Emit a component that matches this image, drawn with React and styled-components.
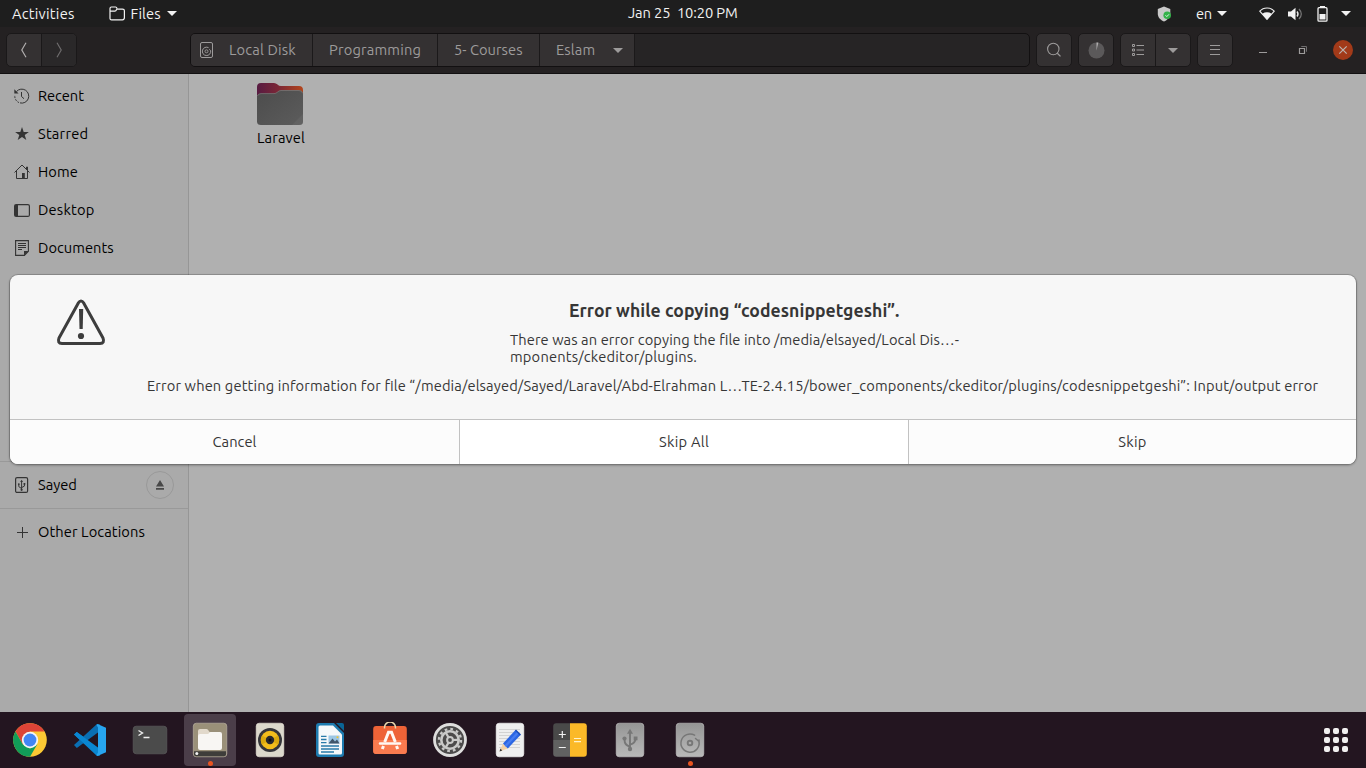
import React from "react";
import styled, { createGlobalStyle, css } from "styled-components";

const Global = createGlobalStyle`
  * { box-sizing: border-box; }
  body { margin: 0; overflow: hidden; background: #231520; }
  button { font: inherit; color: inherit; border: 0; padding: 0; margin: 0; background: none; }
  svg { display: block; flex: none; }
`;

const Desktop = styled.div`
  position: relative;
  width: 1366px;
  height: 768px;
  display: flex;
  flex-direction: column;
  font-family: Ubuntu, "Noto Sans", sans-serif;
  font-size: 14.667px;
  line-height: 18px;
  font-feature-settings: "liga" 1;
`;

const Label = styled.span`
  white-space: pre;
  letter-spacing: ${(p) => p.$track || 0}px;
`;

/* ---------- top panel ---------- */
const Panel = styled.header`
  height: 27px;
  flex: none;
  display: grid;
  grid-template-columns: 628px 1fr auto;
  align-items: center;
  padding-right: 15px;
  background: #1e1e1e;
  color: #f2f2f2;
  line-height: 17px;
`;
const Clock = styled.div`
  padding-bottom: 2px;
`;
const PanelStart = styled.div`
  display: flex;
  align-items: center;
  padding-left: 12px;
  gap: 34px;
`;
const AppMenu = styled.div`
  display: flex;
  align-items: center;
  gap: 6px;
`;
const Tray = styled.div`
  display: flex;
  align-items: center;
`;
const TrayItem = styled.div`
  display: flex;
  align-items: center;
  gap: 5px;
  margin-left: ${(p) => p.$before}px;
`;

/* ---------- header bar ---------- */
const HeaderBar = styled.div`
  height: 47px;
  flex: none;
  display: flex;
  align-items: center;
  padding: 0 13px 0 6px;
  background: #242122;
  border-bottom: 1px solid #121011;
  color: #9d9b9b;
`;
const ButtonGroup = styled.div`
  display: flex;
  height: 34px;
  margin-right: ${(p) => p.$after || 0}px;
  border: 1px solid #1a1819;
  border-radius: 5px;
  background: #343132;
  overflow: hidden;
`;
const ToolButton = styled.button`
  width: ${(p) => p.$width || 34}px;
  display: flex;
  align-items: center;
  justify-content: center;
  background: ${(p) => (p.$muted ? "#2a2829" : "transparent")};
  & + & { border-left: 1px solid #1a1819; }
`;
const PathBar = styled.nav`
  display: flex;
  width: 840px;
  height: 34px;
  margin-right: 6px;
  border: 1px solid #121011;
  border-radius: 5px;
  background: #262425;
  overflow: hidden;
`;
const Crumb = styled.div`
  display: flex;
  align-items: center;
  width: ${(p) => p.$width}px;
  padding-left: ${(p) => p.$inset}px;
  gap: ${(p) => p.$gap || 0}px;
  background: #343132;
  border-right: 1px solid #1b191a;
`;
const WindowControls = styled.div`
  flex: 1;
  display: flex;
  align-items: center;
  justify-content: flex-end;
  gap: 20px;
`;
const ControlButton = styled.button`
  width: 20px;
  height: 20px;
  display: flex;
  align-items: center;
  justify-content: center;
  border-radius: 50%;
  ${(p) => p.$close && css`background: #a23a19; color: #bbb3b0;`}
`;

/* ---------- file window ---------- */
const Body = styled.div`
  flex: 1;
  display: flex;
  min-height: 0;
`;
const Sidebar = styled.aside`
  width: 189px;
  background: #aaaaaa;
  border-right: 1px solid #969696;
  color: #000000;
`;
const Places = styled.div`
  padding: ${(p) => (p.$first ? 3 : 4)}px 0;
  min-height: ${(p) => p.$height || 0}px;
  border-bottom: ${(p) => (p.$last ? "0" : "1px solid #999999")};
`;
const Place = styled.div`
  height: 38px;
  display: flex;
  align-items: center;
  gap: 8px;
  padding: 0 14px;
  svg { color: #343434; }
`;
const Eject = styled.button`
  width: 28px;
  height: 28px;
  margin-left: auto;
  display: flex;
  align-items: center;
  justify-content: center;
  border: 1px solid #999;
  border-radius: 50%;
`;
const FileView = styled.main`
  flex: 1;
  background: #b0b0b0;
  padding: 9px 0 0 49px;
  color: #000000;
`;
const FileTile = styled.div`
  width: 86px;
  display: flex;
  flex-direction: column;
  align-items: center;
  gap: 3px;
  svg { margin-right: 2px; }
`;

/* ---------- error dialog ---------- */
const Dialog = styled.section`
  position: absolute;
  left: 10px;
  top: 275px;
  width: 1346px;
  height: 189px;
  display: flex;
  flex-direction: column;
  background: #f7f7f7;
  border-radius: 8px;
  box-shadow: 0 0 0 1px rgba(0, 0, 0, 0.16), 0 1px 2px 1px rgba(0, 0, 0, 0.2);
  overflow: hidden;
  color: #363636;
`;
const DialogContent = styled.div`
  flex: 1;
  display: flex;
  padding: 24px 0 0 46px;
`;
const Messages = styled.div`
  flex: 1;
  padding-left: 41px;
  display: flex;
  flex-direction: column;
`;
const Title = styled.h1`
  margin: 0 0 9px;
  padding-left: 422px;
  font-size: 17.6px;
  line-height: 23px;
  font-weight: 700;
`;
const Reason = styled.p`
  margin: 0 0 11px;
  padding-left: 363px;
  display: flex;
  flex-direction: column;
  line-height: 17px;
`;
const Detail = styled.p`
  margin: 0;
  line-height: 19px;
`;
const Actions = styled.div`
  height: 45px;
  display: grid;
  grid-template-columns: 449px 449px 1fr;
  border-top: 1px solid #c2c2c2;
`;
const ActionButton = styled.button`
  background: ${(p) => (p.$focus ? "#ffffff" : "#fcfcfc")};
  & + & { border-left: 1px solid #c2c2c2; }
`;

/* ---------- dock ---------- */
const Dock = styled.footer`
  height: 56px;
  flex: none;
  display: flex;
  align-items: center;
  justify-content: space-between;
  padding-right: 18px;
  background: #231520;
`;
const Launchers = styled.div`
  display: flex;
  height: 100%;
  gap: 8px;
  padding: 2px 4px;
`;
const Launcher = styled.button`
  position: relative;
  width: 52px;
  height: 52px;
  display: flex;
  align-items: center;
  justify-content: center;
  border-radius: 4px;
  background: ${(p) => (p.$active ? "#4b3e49" : "transparent")};
`;
const RunningDot = styled.i`
  position: absolute;
  left: 23.5px;
  bottom: 0;
  width: 5px;
  height: 5px;
  border-radius: 50%;
  background: #e95420;
`;
const AppGrid = styled.div`
  display: grid;
  grid-template-columns: repeat(3, 6px);
  gap: 3px;
  i { width: 6px; height: 6px; border-radius: 2px; background: #f1eff0; }
`;

/* ---------- icons ---------- */
const Arrow = ({ w = 10, h = 5 }) => (
  <svg width={w} height={h} viewBox="0 0 10 5" preserveAspectRatio="none"><path d="M0 0h10L5 5z" fill="currentColor" /></svg>
);
const Line = ({ size = 16, sw = 1, children }) => (
  <svg width={size} height={size} viewBox={`0 0 ${size} ${size}`} fill="none" stroke="currentColor" strokeWidth={sw}>{children}</svg>
);
const FolderLine = () => (
  <Line><path strokeWidth="1.2" d="M1 12.500V2.600Q1 1 2.400 1h4.200q1 0 1.300 1.200l.4 1h5.200q1.900 0 1.900 1.600v6.800q0 2.200-1.900 2.200H2.600Q1 13.800 1 12.500zM1 5.200h4.800q1.200 0 1.900-1.900" /></Line>
);
const Shield = () => (
  <svg width="15" height="16" viewBox="0 0 15 16">
    <path d="M7 .5 13.300 3v4.500c0 4-3 6.500-6.300 8C3.500 14 .800 11.500.800 7.500V3z" fill="#c9c9c9" />
    <circle cx="10.200" cy="9.300" r="3.800" fill="#35b24a" />
    <path d="m8.500 9.300 1.300 1.300 2.200-2.300" fill="none" stroke="#e6f8e8" />
  </svg>
);
const Wifi = () => (
  <svg width="16" height="13" viewBox="0 0 16 13">
    <path d="M.8 4.200C4.500-.1 11.500-.1 15.200 4.200L8 12.400z" fill="none" stroke="#eee" strokeWidth="1.100" />
    <path d="M3.300 6.700Q8 4 12.700 6.700L8 12.400z" fill="#f2f2f2" />
  </svg>
);
const Speaker = () => (
  <svg width="15" height="14" viewBox="0 0 15 14">
    <path d="M0 4.500h3L7.500.8v12.400L3 9.500H0z" fill="#f2f2f2" />
    <path d="M9 4.500q2 2.500 0 5" fill="none" stroke="#e8e8e8" strokeWidth="1.400" />
    <path d="M11 2q4.600 5 0 10" fill="none" stroke="#777" strokeWidth="1.200" />
  </svg>
);
const Battery = () => (
  <svg width="11" height="16" viewBox="0 0 11 16">
    <path d="M3 0h5v2H3z" fill="#f2f2f2" />
    <rect x="1" y="1.700" width="9" height="13.500" rx="1" fill="none" stroke="#f2f2f2" strokeWidth="1.300" />
    <path d="M2.500 8h6v5.500h-6z" fill="#f2f2f2" />
  </svg>
);
const Chevron = ({ back }) => (
  <Line><path strokeWidth="1.200" stroke={back ? "#b0aeae" : "#6d6b6c"} d={back ? "M10 .8 5.800 8l4.200 7.200" : "M6 .8 10.200 8 6 15.200"} /></Line>
);
const DiskIcon = () => (
  <Line><rect x="2.500" y=".5" width="12" height="15" rx="1.500" /><circle cx="8.500" cy="9.300" r="1.500" strokeWidth=".9" /><path d="M10.600 5.700A4.200 4.200 0 1 0 12.700 8.800L11.300 7.200" /></Line>
);
const SearchIcon = () => (
  <Line><circle cx="7.300" cy="7" r="5.700" strokeWidth="1.100" /><path d="m11.300 11.200 3.200 3.200" strokeWidth="1.300" /></Line>
);
const PieIcon = () => (
  <svg width="17" height="17" viewBox="0 0 17 17"><circle cx="8.500" cy="8.500" r="8" fill="#5b595a" /><path d="M8.500 8.500V.5h1.900z" fill="#b0aeae" /></svg>
);
const ListIcon = () => (
  <Line size={14}><path d="M1.500 1.500h2v2h-2zM1.500 6h2v2h-2zM1.500 10.500h2v2h-2zM5.500 2.500H13M5.500 7H13M5.500 11.500H13" /></Line>
);
const MenuIcon = () => (<Line size={14}><path d="M2 2.500h10M2 6.500h10M2 11.500h10" /></Line>);
const MinimizeIcon = () => (<Line size={10}><path d="M1 7.500h8" /></Line>);
const RestoreIcon = () => (
  <Line size={10}><path d="M3.500 2V1.500h5v5H8" stroke="#6f6d6e" /><path d="M1.500 3.500h5v5h-5z" strokeWidth="1.200" /></Line>
);
const CloseIcon = () => (<Line size={10}><path d="m1.300 1.300 7.400 7.400M8.700 1.300 1.300 8.700" strokeWidth="1.200" /></Line>);
const RecentIcon = () => (
  <Line><path d="M2.500 3.500A7 7 0 1 1 6 14.900" /><path d="M5 14.600A7 7 0 0 1 .9 7" strokeDasharray="1.800 1.200" /><path d="M7.500 4v4.500l2.500 2.200" /><path d="M.3 1.200v4.300h4.300z" fill="currentColor" stroke="none" /></Line>
);
const StarIcon = () => (
  <svg width="16" height="16" viewBox="0 0 16 16"><path fill="currentColor" d="m8 1 1.700 5h5.200l-4.200 3.100 1.600 5L8 11l-4.300 3.100 1.600-5L1.100 6h5.200z" /></svg>
);
const HomeIcon = () => (
  <Line><path d="M.5 8.500 8 1l7.500 7.500M2.500 7v7.500h11V7M12.500 5V3h1v3" /><path d="M8 9h2.800v5.500H8z" fill="currentColor" stroke="none" /></Line>
);
const DesktopIcon = () => (
  <Line><rect x=".6" y="2.600" width="14.800" height="11.800" rx="1.500" strokeWidth="1.200" /><path d="M1 3h3v11H1z" fill="currentColor" stroke="none" /></Line>
);
const DocumentIcon = () => (
  <Line><path strokeWidth="1.100" d="M1.600.6h12.800v10.600l-4 4.200H1.600z" /><path d="M4 3.500h8M4 5.500h8M4 7.500h8M4 9.500h4" /><path d="M10 15.500V11h4.500z" fill="currentColor" stroke="none" /></Line>
);
const UsbGlyph = () => (
  <g><path d="M8 3.500V12M8 11 5.200 9V6.500M8 10l2.800-1.500V6" /><path d="m8 2.200 1.400 2.200H6.600z" fill="currentColor" stroke="none" /><circle cx="8" cy="12.200" r="1.100" fill="currentColor" stroke="none" /><circle cx="5.200" cy="6.500" r=".9" fill="currentColor" stroke="none" /><path d="M10 5.400h1.700v1.700H10z" fill="currentColor" stroke="none" /></g>
);
const UsbDriveIcon = () => (
  <Line><rect x="1.600" y=".6" width="12" height="14.800" rx="1.500" strokeWidth="1.200" /><g transform="translate(-.4 .6)"><UsbGlyph /></g></Line>
);
const PlusIcon = () => (<Line><path d="M8.500 3v11M3 8.500h11" /></Line>);
const EjectIcon = () => (
  <svg width="8" height="10" viewBox="0 0 8 10"><path d="M4 0 8 6.500H0zM0 8h8v1.800H0z" fill="#484848" /></svg>
);
const FolderIcon = () => (
  <svg width="48" height="43" viewBox="0 0 48 43">
    <defs>
      <linearGradient id="fback" x1="0" x2="1"><stop offset="0" stopColor="#571b42" /><stop offset=".45" stopColor="#7a2636" /><stop offset="1" stopColor="#b3451c" /></linearGradient>
      <linearGradient id="ffront" x1="0" y1="0" x2="1" y2="1"><stop offset="0" stopColor="#4c4c4c" /><stop offset="1" stopColor="#5c5c5c" /></linearGradient>
    </defs>
    <path d="M1 4q0-4 4-4h13q2 0 3.500 1.500T25 3h18q4 0 4 4v20H1z" fill="url(#fback)" />
    <path d="M1 14q0-3.500 4-3.500h13q2 0 3.500-1.500T25 7.300h18q4 0 4 4v27.200q0 3.500-4 3.500H5q-4 0-4-3.500z" fill="url(#ffront)" />
    <path d="M1.500 13q.5-2.400 3.500-2.400h13q2 0 3.500-1.500T25 7.500h18q3 0 3.500 2.700" fill="none" stroke="#7a7a7a" strokeWidth=".7" />
    <path d="M47 31v8q0 3-4 3h-7z" fill="#6a6a6a" opacity=".45" />
  </svg>
);
const WarningIcon = () => (
  <svg width="50" height="48" viewBox="0 0 50 48">
    <path d="M22.200 4.200q2.800-4.200 5.600 0L47 39q2 5.300-3 5.600H6Q1 44.300 3 39z" fill="none" stroke="#3d3d3d" strokeWidth="3" strokeLinejoin="round" />
    <path d="M23 10h4.200l-.5 20h-3.200z" fill="#3d3d3d" /><circle cx="25" cy="37" r="3.100" fill="#3d3d3d" />
  </svg>
);

const Art = ({ children }) => <svg width="36" height="36" viewBox="0 0 36 36">{children}</svg>;
const ChromeArt = () => (
  <Art>
    <circle cx="18" cy="18" r="16.800" fill="#fcc934" />
    <path d="M3.450 9.600A16.800 16.800 0 0 1 32.550 9.600H18L10.700 22.200z" fill="#dd4437" />
    <path d="M3.450 9.600A16.800 16.800 0 0 0 18 34.800L25.300 22.200 18 26.400 10.700 22.200z" fill="#119d58" />
    <circle cx="18" cy="18" r="8.200" fill="#f5f5f5" /><circle cx="18" cy="18" r="6.400" fill="#4286f4" />
  </Art>
);
const CodeArt = () => (
  <Art>
    <path d="M2 12.500 4.800 10 28 27v6.500L25 34z" fill="#0a86d1" />
    <path d="M2 23 4.800 26 28 9V2.500L25 2z" fill="#0a6fb3" />
    <path d="M2 12.500 4.800 10 16 18.200 12.500 22z" fill="#0a86d1" />
    <path d="M25.500 2 34 5.800v24.500L25.500 34l-1-1 1.500-2.500V5.500l-1.500-2.500z" fill="#27a5ef" />
  </Art>
);
const TerminalArt = () => (
  <Art>
    <rect x="1.200" y="4.200" width="33.600" height="27.600" rx="3" fill="#4b4b4b" stroke="#5b5b5b" strokeWidth=".7" />
    <path d="m6.500 8.500 4 2.500-4 2.500M11.500 15.500h6" fill="none" stroke="#eee" strokeWidth="1.400" />
  </Art>
);
const FilesArt = () => (
  <Art>
    <rect x="1.300" y="1.200" width="33.500" height="33.600" rx="3" fill="#9a9079" stroke="#c1b9a7" strokeWidth=".6" />
    <path d="M2 29.200h32v3q0 2-3 2H5q-3 0-3-2z" fill="#3e3d3a" />
    <circle cx="4.800" cy="31.500" r="1.500" fill="#f3f3f3" />
    <path d="M6 9q0-2 2-2h6.500q1.500 0 2 1.500T18.500 10H24v10H6z" fill="#e2d9cb" />
    <path d="M6 14q0-2 2-2h7.500q1 0 1.700-1t1.800-1H28q2 0 2 2v14q0 2-2 2H8q-2 0-2-2z" fill="#f8f6f3" />
  </Art>
);
const MusicArt = () => (
  <Art>
    <rect x="4.200" y="1.200" width="27.600" height="33.600" rx="3" fill="#dcd8cc" stroke="#eeeade" strokeWidth=".6" />
    <circle cx="18" cy="18" r="12" fill="#35353a" /><circle cx="18" cy="18" r="9.200" fill="#f3bd1c" />
    <path d="M18 18 10 13.500a9.200 9.200 0 0 0 0 9zM18 18l8-4.500a9.200 9.200 0 0 1 0 9z" fill="#dba90f" />
    <circle cx="18" cy="18" r="4.200" fill="#29292d" /><circle cx="18" cy="18" r="1.500" fill="#101012" />
  </Art>
);
const WriterArt = () => (
  <Art>
    <path d="M4 4q0-3 3-3h15l10 10v21q0 3-3 3H7q-3 0-3-3z" fill="#1d7bb0" />
    <path d="M24 1h6q2 0 2 2v6z" fill="#0a6496" />
    <path d="M6.500 5q0-1.500 1.500-1.500h13L30 12.500V31q0 1.500-1.500 1.500H8q-1.500 0-1.500-1.500z" fill="#f5f8fa" />
    <path d="M9 14.300h5.500M9 17.500h5.500M9 20.700h5.500M9 24h18M9 27h18M9 30h13" stroke="#287aa9" strokeWidth="1.300" />
    <path d="M16.500 13.500h11v8h-11z" fill="#9cc7e5" /><path d="m16.500 21.500 4-5 2.500 3 2-2 2.500 4z" fill="#40566b" /><circle cx="25.500" cy="15.300" r="1" fill="#f5c229" />
  </Art>
);
const SoftwareArt = () => (
  <Art>
    <rect x="1.200" y="4" width="33.600" height="28" rx="3" fill="#ee6337" />
    <path d="M1.200 18h33.600v11q0 3-3 3H4.200q-3 0-3-3z" fill="#fa7b4f" />
    <path d="M12.500 6.500V5.500a5.500 5.500 0 0 1 11 0v1" fill="none" stroke="#ead7ad" strokeWidth="1.500" />
    <path d="M8 21.500h20" stroke="#fff8f2" strokeWidth="2.500" strokeLinecap="round" />
    <path d="m10.300 27 1.200-3M25.700 27l-1.200-3M12.700 20 16.500 10.200h3L23.300 20" fill="none" stroke="#fff8f2" strokeWidth="3" />
  </Art>
);
const SettingsArt = () => (
  <Art>
    <circle cx="18" cy="18" r="15.500" fill="#4c4b4b" stroke="#dededd" strokeWidth="2.800" />
    <circle cx="18" cy="18" r="11" fill="none" stroke="#c9c9c8" strokeWidth="2.400" strokeDasharray="2.700 3.060" />
    <circle cx="18" cy="18" r="8.700" fill="none" stroke="#c9c9c8" strokeWidth="2.600" />
    <path d="m18 18 8-.1M18 18l-4.200-7.400M18 18l-4.200 7.400" stroke="#c9c9c8" strokeWidth="2.200" />
    <circle cx="18" cy="18" r="3.900" fill="#c9c9c8" /><circle cx="18" cy="18" r="1.900" fill="#4c4b4b" />
  </Art>
);
const EditorArt = () => (
  <Art>
    <rect x="4.200" y="1.200" width="27.600" height="33.600" rx="3" fill="#efefef" stroke="#fff" strokeWidth=".6" />
    <path d="M7 7.500h21M7 10.500h21M7 13.500h21M7 16.500h21M7 19.500h21M7 22.500h21M7 25.500h21" stroke="#cfcfcf" strokeWidth=".9" />
    <path d="m11 21.500 4.800 5L7.500 29.500z" fill="#f3d1a5" /><path d="m8.500 26.500 1.700 2L7.500 29.500z" fill="#333" />
    <path d="M23.500 8 11 21.500l4.800 5L28.500 13z" fill="#2b66e3" /><path d="m25.200 9.800-12.600 13.500 1.600 1.600L26.900 11.300z" fill="#467cf0" />
    <path d="m23.500 8 5 5" stroke="#174bb9" strokeWidth="1.500" />
  </Art>
);
const CalculatorArt = () => (
  <Art>
    <path d="M4.200 1.200H18V18H1.200V4.200q0-3 3-3z" fill="#494949" /><path d="M1.200 18H18v16.800H4.200q-3 0-3-3z" fill="#616161" />
    <path d="M18 1.200h13.800q3 0 3 3v27.600q0 3-3 3H18z" fill="#fbb928" />
    <path d="M6.800 12.500h7M10.300 9v7M6.800 25.500h7" stroke="#f0f0f0" strokeWidth="1.200" /><path d="M22 16.500h7M22 19.700h7" stroke="#fff2c9" strokeWidth="1.200" />
  </Art>
);
const DriveBase = () => (
  <>
    <defs><linearGradient id="drive" x2="0" y2="1"><stop stopColor="#959595" /><stop offset="1" stopColor="#b9b9b9" /></linearGradient></defs>
    <rect x="4.200" y="1.200" width="27.600" height="33.600" rx="3" fill="url(#drive)" stroke="#c6c6c6" strokeWidth=".6" />
  </>
);
const UsbArt = () => (
  <Art>
    <DriveBase />
    <g fill="none" stroke="#777" strokeWidth="1.900"><path d="M18 10v17M18 24.500q-5.500-1-5.500-7M18 22.500q5.500-1 5.500-6.500" /></g>
    <g fill="#777"><path d="m18 6.800 3 5h-6z" /><circle cx="18" cy="27" r="2.200" /><circle cx="12.500" cy="16.500" r="2.100" /><path d="M21.700 14.500h3.800v3.800h-3.800z" /></g>
  </Art>
);
const DiskArt = () => (
  <Art>
    <DriveBase />
    <g fill="none" stroke="#777" strokeWidth="1.500"><circle cx="18" cy="21" r="2.300" strokeWidth="1.900" /><path d="M22.600 13.200A9.100 9.100 0 1 0 27 19.500L23.500 16.500M27 20.500V18" strokeLinecap="round" /></g>
  </Art>
);

const places = [
  { name: "Recent", Icon: RecentIcon, track: -0.05 },
  { name: "Starred", Icon: StarIcon, track: 0.22 },
  { name: "Home", Icon: HomeIcon, track: 0.1 },
  { name: "Desktop", Icon: DesktopIcon, track: 0.2 },
  { name: "Documents", Icon: DocumentIcon, track: 0.04 },
];
const launchers = [
  { id: "chrome", Icon: ChromeArt },
  { id: "code", Icon: CodeArt },
  { id: "terminal", Icon: TerminalArt },
  { id: "files", Icon: FilesArt, active: true, running: true },
  { id: "music", Icon: MusicArt },
  { id: "writer", Icon: WriterArt },
  { id: "software", Icon: SoftwareArt },
  { id: "settings", Icon: SettingsArt },
  { id: "editor", Icon: EditorArt },
  { id: "calculator", Icon: CalculatorArt },
  { id: "usb", Icon: UsbArt },
  { id: "disk", Icon: DiskArt, running: true },
];

export default function App() {
  return (
    <Desktop>
      <Global />
      <Panel>
        <PanelStart>
          <Label $track={0.25}>Activities</Label>
          <AppMenu><FolderLine /><Label $track={0.12}>Files</Label><Arrow /></AppMenu>
        </PanelStart>
        <Clock><Label $track={-0.1}>{"Jan 25  10:20 PM"}</Label></Clock>
        <Tray>
          <TrayItem $before={0}><Shield /></TrayItem>
          <TrayItem $before={24}><Label $track={-0.2}>en</Label><Arrow /></TrayItem>
          <TrayItem $before={32}><Wifi /></TrayItem>
          <TrayItem $before={13}><Speaker /></TrayItem>
          <TrayItem $before={14}><Battery /></TrayItem>
          <TrayItem $before={13}><Arrow /></TrayItem>
        </Tray>
      </Panel>

      <HeaderBar>
        <ButtonGroup $after={113}>
          <ToolButton><Chevron back /></ToolButton>
          <ToolButton $muted $width={35}><Chevron /></ToolButton>
        </ButtonGroup>
        <PathBar>
          <Crumb $width={122} $inset={7} $gap={15}><DiskIcon /><Label $track={0.15}>Local Disk</Label></Crumb>
          <Crumb $width={125} $inset={16}><Label $track={0.19}>Programming</Label></Crumb>
          <Crumb $width={102} $inset={16}><Label $track={0.04}>5- Courses</Label></Crumb>
          <Crumb $width={95} $inset={16} $gap={18}><Label $track={0.1}>Eslam</Label><Arrow /></Crumb>
        </PathBar>
        <ButtonGroup $after={6}><ToolButton><SearchIcon /></ToolButton></ButtonGroup>
        <ButtonGroup $after={6}><ToolButton><PieIcon /></ToolButton></ButtonGroup>
        <ButtonGroup $after={6}>
          <ToolButton><ListIcon /></ToolButton>
          <ToolButton $width={35}><Arrow /></ToolButton>
        </ButtonGroup>
        <ButtonGroup><ToolButton><MenuIcon /></ToolButton></ButtonGroup>
        <WindowControls>
          <ControlButton><MinimizeIcon /></ControlButton>
          <ControlButton><RestoreIcon /></ControlButton>
          <ControlButton $close><CloseIcon /></ControlButton>
        </WindowControls>
      </HeaderBar>

      <Body>
        <Sidebar>
          <Places $first $height={388}>
            {places.map(({ name, Icon, track }) => (
              <Place key={name}><Icon /><Label $track={track}>{name}</Label></Place>
            ))}
          </Places>
          <Places>
            <Place><UsbDriveIcon /><Label $track={-0.04}>Sayed</Label><Eject><EjectIcon /></Eject></Place>
          </Places>
          <Places $last>
            <Place><PlusIcon /><Label $track={0.1}>Other Locations</Label></Place>
          </Places>
        </Sidebar>
        <FileView>
          <FileTile><FolderIcon /><Label $track={0.15}>Laravel</Label></FileTile>
        </FileView>
      </Body>

      <Dock>
        <Launchers>
          {launchers.map(({ id, Icon, active, running }) => (
            <Launcher key={id} $active={active}><Icon />{running && <RunningDot />}</Launcher>
          ))}
        </Launchers>
        <AppGrid>{Array.from({ length: 9 }, (_, i) => <i key={i} />)}</AppGrid>
      </Dock>

      <Dialog>
        <DialogContent>
          <WarningIcon />
          <Messages>
            <Title><Label $track={0.05}>Error while copying “codesnippetgeshi”.</Label></Title>
            <Reason>
              <Label $track={0.09}>There was an error copying the file into /media/elsayed/Local Dis…-</Label>
              <Label $track={0.2}>mponents/ckeditor/plugins.</Label>
            </Reason>
            <Detail>
              <Label $track={0.137}>Error when getting information for file “/media/elsayed/Sayed/Laravel/Abd-Elrahman L…TE-2.4.15/bower_components/ckeditor/plugins/codesnippetgeshi”: Input/output error</Label>
            </Detail>
          </Messages>
        </DialogContent>
        <Actions>
          <ActionButton><Label $track={0.07}>Cancel</Label></ActionButton>
          <ActionButton $focus><Label $track={0.28}>Skip All</Label></ActionButton>
          <ActionButton><Label $track={0.3}>Skip</Label></ActionButton>
        </Actions>
      </Dialog>
    </Desktop>
  );
}
